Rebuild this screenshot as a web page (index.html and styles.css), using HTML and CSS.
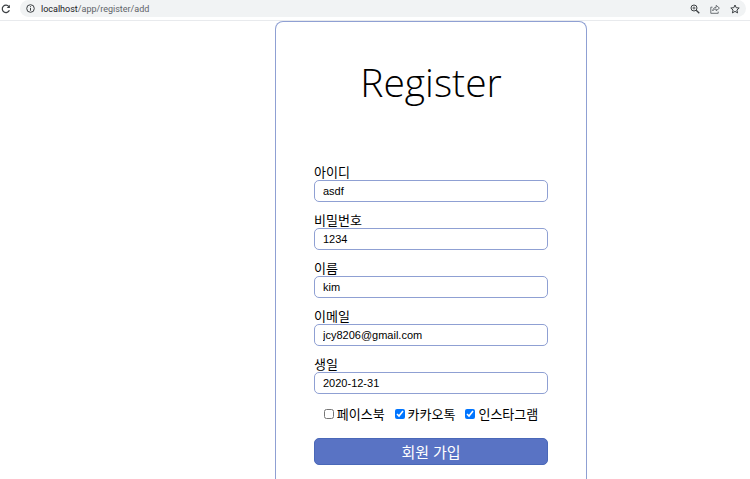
FILE: index.html
```html
<!DOCTYPE html>
<html lang="ko">
<head>
    <meta charset="UTF-8">
    <title>Register</title>
    <link rel="stylesheet" href="styles.css">
</head>
<body>
    <header class="toolbar">
        <button type="button" class="icon_btn reload" aria-label="새로고침">
            <svg width="10" height="10" viewBox="0 0 10 10" fill="none" stroke="#3c4043" stroke-width="1.2">
                <path d="M8.4 6.3A3.7 3.7 0 1 1 7.9 2.6"/>
                <path d="M8.9 0.8V4H5.7Z" fill="#3c4043" stroke="none"/>
            </svg>
        </button>
        <div class="address">
            <svg width="9" height="9" viewBox="0 0 9 9" fill="none" stroke="#3c4043">
                <circle cx="4.5" cy="4.5" r="3.8"/>
                <path d="M4.5 4V6.7M4.5 2.2V3.2"/>
            </svg>
            <span class="url"><span class="host">localhost</span>/app/register/add</span>
            <button type="button" class="icon_btn" aria-label="확대">
                <svg width="10" height="10" viewBox="0 0 10 10" fill="none" stroke="#3c4043">
                    <circle cx="4" cy="4" r="3"/>
                    <path d="M6.2 6.2L9.3 9.3" stroke-width="1.3"/>
                    <path d="M2.5 4H5.5M4 2.5V5.5" stroke-width="0.8"/>
                </svg>
            </button>
            <button type="button" class="icon_btn" aria-label="공유">
                <svg width="10" height="10" viewBox="0 0 10 10" fill="none" stroke="#5f6368" stroke-width="0.9">
                    <path d="M2.5 3.2H0.8V9.3H8.2V7.6"/>
                    <path d="M2.7 6.8C3 4.6 4.2 3.4 6.2 3.3V1.3L9.4 4.1L6.2 6.8V5C4.7 5 3.6 5.6 2.7 6.8Z"/>
                </svg>
            </button>
            <button type="button" class="icon_btn" aria-label="북마크">
                <svg width="10" height="10" viewBox="0 0 10 10" fill="none" stroke="#3c4043">
                    <path d="M5 1L6.2 3.7L9.2 4L6.9 6L7.6 8.9L5 7.4L2.4 8.9L3.1 6L0.8 4L3.8 3.7Z"/>
                </svg>
            </button>
        </div>
    </header>

    <main class="page">
        <form class="register">
            <h1 class="title">Register</h1>

            <label for="id">아이디</label>
            <input class="input_field" type="text" id="id" name="id" value="asdf">

            <label for="pwd">비밀번호</label>
            <input class="input_field" type="text" id="pwd" name="pwd" value="1234">

            <label for="name">이름</label>
            <input class="input_field" type="text" id="name" name="name" value="kim">

            <label for="email">이메일</label>
            <input class="input_field" type="text" id="email" name="email" value="jcy8206@gmail.com">

            <label for="birth">생일</label>
            <input class="input_field" type="text" id="birth" name="birth" value="2020-12-31">

            <div class="sns_chk">
                <label><input type="checkbox" name="sns" value="facebook">페이스북</label>
                <label><input type="checkbox" name="sns" value="kakaotalk" checked>카카오톡</label>
                <label><input type="checkbox" name="sns" value="instagram" checked>인스타그램</label>
            </div>

            <button type="submit" class="submit_btn">회원 가입</button>
        </form>
    </main>
</body>
</html>
```
FILE: styles.css
```css
* {
    box-sizing: border-box;
}
body {
    display: flex;
    flex-direction: column;
    height: 100vh;
    margin: 0;
    overflow: hidden;
    background: #fff;
    color: #000;
    font-family: "Open Sans", "Noto Sans CJK KR", sans-serif;
    font-size: 13px;
}
.toolbar {
    display: flex;
    flex: none;
    align-items: center;
    height: 21px;
    padding: 0 4px 3px 0;
    border-bottom: 1px solid #e8eaed;
}
.icon_btn {
    display: flex;
    padding: 0;
    border: 0;
    background: none;
}
.reload {
    margin: 0 9px 0 1px;
}
.address {
    display: flex;
    flex: 1;
    align-items: center;
    gap: 10px;
    height: 17px;
    padding: 0 6px;
    border-radius: 9px;
    background: #f1f3f4;
}
.url {
    flex: 1;
    margin-left: -4px;
    color: #5f6368;
    font-family: Roboto, sans-serif;
    font-size: 9px;
    line-height: 12px;
}
.host {
    color: #202124;
}
.page {
    display: flex;
    flex: 1;
    justify-content: center;
    min-height: 0;
    padding-left: 112px;
}
.register {
    display: flex;
    flex-direction: column;
    width: 312px;
    padding: 0 38px;
    border: 1px solid #8fa0d3;
    border-bottom: 0;
    border-radius: 8px 8px 0 0;
}
.title {
    margin: 32px 0 54px;
    font-size: 39px;
    font-weight: 300;
    line-height: 56px;
    text-align: center;
}
.register label {
    line-height: 16px;
}
.input_field {
    flex: none;
    height: 22px;
    margin: 0 0 10px;
    padding: 0 8px;
    border: 1px solid #8fa0d3;
    border-radius: 5px;
    font-family: "Liberation Sans", Arial, sans-serif;
    font-size: 11px;
}
.sns_chk {
    display: flex;
    justify-content: center;
    gap: 10px;
    margin: 2px 0 16px;
}
.sns_chk label {
    display: flex;
    align-items: center;
    gap: 3px;
}
.sns_chk input {
    width: 10px;
    height: 10px;
    margin: 0;
}
.submit_btn {
    flex: none;
    height: 27px;
    padding: 0;
    border: 1px solid #4a68b8;
    border-radius: 5px;
    background: #5973c4;
    color: #fff;
    font-family: inherit;
    font-size: 15px;
    line-height: 20px;
}
```
